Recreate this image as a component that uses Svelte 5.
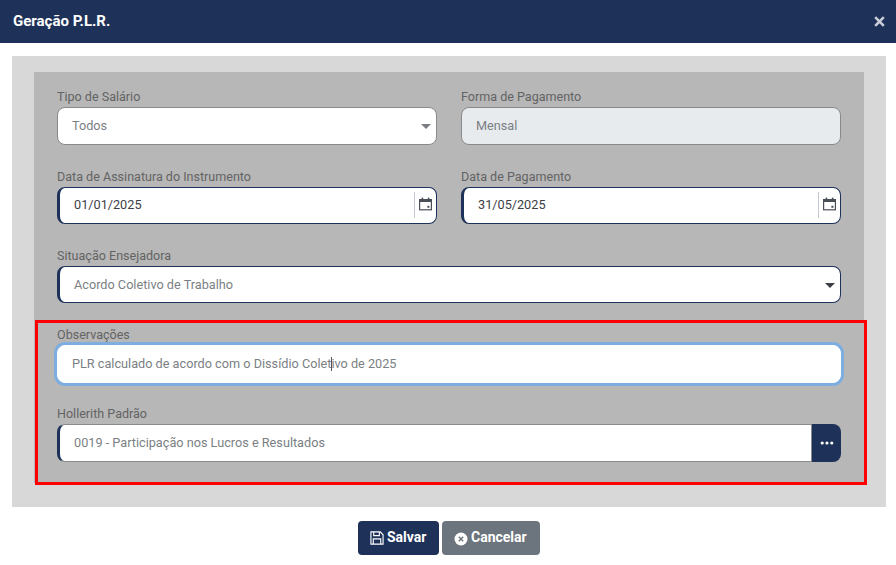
<script>
  const tipo = 'Todos'
  const forma = 'Mensal'
  const dates = [
    { label: 'Data de Assinatura do Instrumento', value: '01/01/2025' },
    { label: 'Data de Pagamento', value: '31/05/2025' },
  ]
</script>

<div class="modal">
  <header class="head">
    <span class="title">Geração P.L.R.</span>
    <svg class="close" width="11" height="11" viewBox="0 0 11 11">
      <path d="M1.2 1.2 9.8 9.8M9.8 1.2 1.2 9.8" stroke="#c9ced8" stroke-width="2.6" fill="none" />
    </svg>
  </header>

  <div class="outer">
    <div class="inner">
      <div class="grid">
        <div class="field">
          <div class="label">Tipo de Salário</div>
          <div class="input select plain">
            <span class="val muted wide">{tipo}</span>
            <span class="caret"></span>
          </div>
        </div>
        <div class="field">
          <div class="label">Forma de Pagamento</div>
          <div class="input disabled"><span class="val muted wide">{forma}</span></div>
        </div>

        {#each dates as d}
          <div class="field">
            <div class="label">{d.label}</div>
            <div class="input req">
              <span class="val dark">{d.value}</span>
              <span class="cal">
                <svg width="13" height="14" viewBox="0 0 13 14">
                  <rect x="0.6" y="2.6" width="11.8" height="10.2" fill="none" stroke="#4a4f57" stroke-width="1.2" />
                  <rect x="0.6" y="2" width="11.8" height="3" fill="#4a4f57" />
                  <rect x="2.6" y="0.6" width="1.6" height="2" fill="#4a4f57" />
                  <rect x="8.8" y="0.6" width="1.6" height="2" fill="#4a4f57" />
                  <rect x="8.4" y="8.8" width="2" height="2" fill="#4a4f57" />
                </svg>
              </span>
            </div>
          </div>
        {/each}

        <div class="field span">
          <div class="label">Situação Ensejadora</div>
          <div class="input req select">
            <span class="val muted low">Acordo Coletivo de Trabalho</span>
            <span class="caret darkc"></span>
          </div>
        </div>

        <div class="field span">
          <div class="label">Observações</div>
          <div class="input focus">
            <span class="val muted wide">PLR calculado de acordo com o Dissídio Coletivo de 2025</span>
            <span class="cursor"></span>
          </div>
        </div>

        <div class="field span">
          <div class="label">Hollerith Padrão</div>
          <div class="lookup">
            <div class="input req-left">
              <span class="val muted">0019 - Participação nos Lucros e Resultados</span>
            </div>
            <div class="more">
              <svg width="14" height="4" viewBox="0 0 14 4">
                <circle cx="2.2" cy="2" r="1.6" fill="#fff" />
                <circle cx="7" cy="2" r="1.6" fill="#fff" />
                <circle cx="11.8" cy="2" r="1.6" fill="#fff" />
              </svg>
            </div>
          </div>
        </div>
      </div>
    </div>
    <div class="highlight"></div>
  </div>

  <footer class="foot">
    <button class="btn save">
      <svg width="14" height="14" viewBox="0 0 15 15">
        <path d="M1 1h10l3 3v10H1z M4 1v4h6V1 M3.5 14V8.5h8V14" fill="none" stroke="#fff" stroke-width="1.2" />
      </svg>
      <span class="txt">Salvar</span>
    </button>
    <button class="btn cancel">
      <svg class="x" width="14" height="14" viewBox="0 0 14 14">
        <circle cx="7" cy="7" r="6.5" fill="#fff" />
        <path d="M4.8 4.8 9.2 9.2M9.2 4.8 4.8 9.2" stroke="#6c757d" stroke-width="1.4" />
      </svg>
      <span class="txt">Cancelar</span>
    </button>
  </footer>
</div>

<style>
  :global(body) {
    margin: 0;
    background: #fff;
    font-family: Roboto, sans-serif;
  }

  .modal {
    width: 896px;
    height: 565px;
    overflow: hidden;
  }

  .head {
    height: 43px;
    background: #1e3158;
    color: #fff;
    display: flex;
    align-items: center;
    justify-content: space-between;
    padding: 0 11px 0 13px;
    box-sizing: border-box;
  }
  .title {
    font-size: 15px;
    font-weight: 700;
    position: relative;
    top: -1px;
  }

  .outer {
    position: relative;
    margin: 13px 10px 0 12px;
    height: 451px;
    background: #d8d8d8;
    padding: 16px 22px 0;
    box-sizing: border-box;
  }

  .inner {
    height: 411px;
    background: #b7b7b7;
    padding: 17.45px 23px 0;
    box-sizing: border-box;
  }

  .grid {
    display: grid;
    grid-template-columns: 380px 380px;
    column-gap: 24px;
    row-gap: 23.75px;
  }
  .span {
    grid-column: 1 / 3;
  }

  .label {
    font-size: 12.55px;
    line-height: 15px;
    color: #636363;
    margin-bottom: 3px;
  }

  .input {
    position: relative;
    height: 37.5px;
    box-sizing: border-box;
    display: flex;
    align-items: center;
    background: #fff;
    border: 1px solid #8a8a8a;
    border-radius: 8px;
    font-size: 12.7px;
  }
  .val {
    padding-left: 15px;
    padding-bottom: 1.5px;
  }
  .val.wide {
    padding-left: 14px;
  }
  .val.low {
    padding-bottom: 0;
  }
  .muted {
    color: #7b7f84;
  }
  .dark {
    color: #3c4046;
  }

  .disabled {
    background: #e8ebee;
  }

  .req {
    border-color: #1e3158;
    border-left-width: 3px;
  }
  .req .val {
    padding-left: 14px;
  }

  .focus {
    border: 1px solid #fff;
    box-shadow: 0 0 0 3px #7eaee0;
  }
  .cursor {
    position: absolute;
    left: 273px;
    top: 11px;
    width: 1px;
    height: 14px;
    background: #555;
  }

  .caret {
    position: absolute;
    right: 5px;
    top: 16px;
    border-left: 5px solid transparent;
    border-right: 5px solid transparent;
    border-top: 5px solid #7b7f84;
  }
  .darkc {
    border-top-color: #3c4046;
  }

  .cal {
    margin-left: auto;
    align-self: center;
    height: 26px;
    width: 22px;
    border-left: 1px solid #c4c8cf;
    display: flex;
    align-items: center;
    justify-content: center;
    padding-bottom: 2px;
    box-sizing: border-box;
  }

  .lookup {
    display: flex;
    height: 37.5px;
  }
  .req-left {
    flex: 1;
    border-left: 3px solid #1e3158;
    border-right: 1px solid #8a8a8a;
    border-radius: 8px 0 0 8px;
  }
  .req-left .val {
    padding-left: 14px;
  }
  .more {
    width: 29px;
    background: #1e3158;
    border-radius: 0 8px 8px 0;
    display: flex;
    align-items: center;
    justify-content: center;
  }

  /* red annotation drawn over the form */
  .highlight {
    position: absolute;
    left: 23px;
    top: 264px;
    width: 832px;
    height: 165px;
    box-sizing: border-box;
    border: 3px solid #f00;
  }

  .foot {
    display: flex;
    justify-content: center;
    gap: 3px;
    margin-top: 14px;
    padding-left: 2px;
  }
  .btn {
    height: 34px;
    border: 0;
    border-radius: 4px;
    color: #fff;
    font-family: Roboto, sans-serif;
    font-size: 14px;
    font-weight: 700;
    display: flex;
    align-items: center;
    gap: 3px;
    padding: 0 12px;
  }
  .txt {
    position: relative;
    top: -1px;
  }
  .save {
    width: 81px;
    background: #1e3158;
  }
  .cancel {
    width: 98px;
    background: #6c757d;
  }
  .x {
    position: relative;
    top: 1px;
  }
</style>
